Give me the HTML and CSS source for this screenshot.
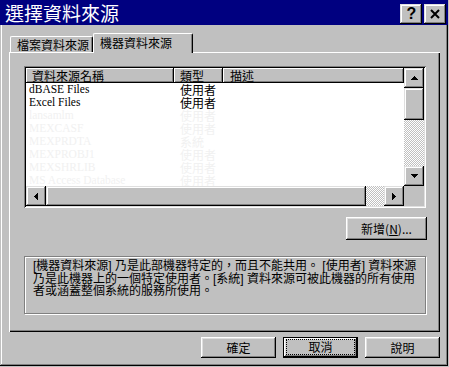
FILE: index.html
```html
<!DOCTYPE html>
<html lang="zh-Hant">
<head>
<meta charset="utf-8">
<title>選擇資料來源</title>
<link rel="stylesheet" href="styles.css">
</head>
<body>
<div class="window">
  <div class="titlebar">
    <span class="title">選擇資料來源</span>
    <div class="caption-btns">
      <div class="cbtn help">?</div>
      <div class="cbtn close">
        <svg width="10" height="10" viewBox="0 0 10 10"><path d="M1 1L9 9M9 1L1 9" stroke="#000" stroke-width="2" fill="none"/></svg>
      </div>
    </div>
  </div>

  <div class="tabs">
    <div class="tab">檔案資料來源</div>
    <div class="tab active">機器資料來源</div>
  </div>

  <div class="panel">
    <div class="listview">
      <div class="lv-content">
        <div class="lv-header">
          <div class="hcell c1">資料來源名稱</div>
          <div class="hcell c2">類型</div>
          <div class="hcell c3">描述</div>
        </div>
        <div class="lv-row"><span class="name">dBASE Files</span><span class="type">使用者</span></div>
        <div class="lv-row"><span class="name">Excel Files</span><span class="type">使用者</span></div>
        <div class="lv-row faded"><span class="name">lansamlm</span><span class="type">使用者</span></div>
        <div class="lv-row faded"><span class="name">MEXCASF</span><span class="type">使用者</span></div>
        <div class="lv-row faded"><span class="name">MEXPRDTA</span><span class="type">系統</span></div>
        <div class="lv-row faded"><span class="name">MEXPROBJ1</span><span class="type">使用者</span></div>
        <div class="lv-row faded"><span class="name">MEXSHRLIB</span><span class="type">使用者</span></div>
        <div class="lv-row faded"><span class="name">MS Access Database</span><span class="type">使用者</span></div>
      </div>
      <div class="vscroll">
        <div class="sbtn"><svg width="7" height="4" viewBox="0 0 7 4"><path d="M3 0h1v1h-1z M2 1h3v1h-3z M1 2h5v1h-5z M0 3h7v1h-7z"/></svg></div>
        <div class="sthumb vthumb"></div>
        <div class="strack"></div>
        <div class="sbtn"><svg width="7" height="4" viewBox="0 0 7 4"><path d="M0 0h7v1h-7z M1 1h5v1h-5z M2 2h3v1h-3z M3 3h1v1h-1z"/></svg></div>
      </div>
      <div class="hscroll">
        <div class="sbtn"><svg width="4" height="7" viewBox="0 0 4 7"><path d="M0 3h1v1h-1z M1 2h1v3h-1z M2 1h1v5h-1z M3 0h1v7h-1z"/></svg></div>
        <div class="sthumb hthumb"></div>
        <div class="strack"></div>
        <div class="sbtn"><svg width="4" height="7" viewBox="0 0 4 7"><path d="M0 0h1v7h-1z M1 1h1v5h-1z M2 2h1v3h-1z M3 3h1v1h-1z"/></svg></div>
      </div>
      <div class="corner"></div>
    </div>

    <div class="add-row">
      <button class="btn add">新增(<u>N</u>)...</button>
    </div>

    <div class="info">[機器資料來源] 乃是此部機器特定的，而且不能共用。 [使用者] 資料來源<br>乃是此機器上的一個特定使用者。[系統] 資料來源可被此機器的所有使用<br>者或涵蓋整個系統的服務所使用。</div>
  </div>

  <div class="buttons">
    <button class="btn">確定</button>
    <button class="btn default"><span class="focus">取消</span></button>
    <button class="btn">說明</button>
  </div>
</div>
</body>
</html>
```

FILE: styles.css
```css
* { box-sizing: border-box; }
html, body { margin: 0; padding: 0; }
body {
  width: 449px;
  height: 367px;
  overflow: hidden;
  background: #c0c0c0;
  font-family: "Liberation Sans", "Noto Sans CJK TC", sans-serif;
  font-size: 12px;
  color: #000;
}

.window {
  width: 448px;
  height: 366px;
  background: #c0c0c0;
  box-shadow: inset -1px -1px #000, inset 1px 1px #c0c0c0,
              inset -2px -2px #808080, inset 2px 2px #fff;
  display: flex;
  flex-direction: column;
}

/* title bar */
.titlebar {
  height: 25px;
  background: #000080;
  display: flex;
  padding: 0 2px 0 5px;
}
.title {
  flex: 1;
  align-self: center;
  color: #fff;
  font-family: "Noto Sans CJK TC", sans-serif;
  font-size: 19px;
  line-height: 19px;
  white-space: nowrap;
}
.caption-btns {
  display: flex;
  gap: 2px;
  padding-top: 4px;
}
.cbtn {
  width: 22px;
  height: 20px;
  background: #c0c0c0;
  box-shadow: inset -1px -1px #000, inset 1px 1px #dfdfdf,
              inset -2px -2px #808080, inset 2px 2px #fff;
  display: flex;
  align-items: center;
  justify-content: center;
}
.help {
  font-family: "Liberation Sans", sans-serif;
  font-weight: bold;
  font-size: 16px;
  line-height: 16px;
  padding-left: 1px;
}

/* tabs */
.tabs {
  display: flex;
  align-items: flex-end;
  height: 20px;
  margin-top: 8px;
  margin-bottom: -1px;
  padding-left: 10px;
  position: relative;
  z-index: 1;
}
.tab {
  height: 16px;
  width: 83px;
  margin-bottom: 1px;
  background: #c0c0c0;
  border-top: 1px solid #fff;
  border-left: 1px solid #fff;
  border-right: 1px solid #000;
  border-radius: 2px 2px 0 0;
  box-shadow: inset -1px 0 #808080;
  display: flex;
  align-items: center;
  padding-left: 6px;
  font-family: "Noto Sans CJK TC", sans-serif;
  white-space: nowrap;
  line-height: 12px;
}
.tab.active {
  height: 20px;
  width: 100px;
  margin-bottom: 0;
  padding-left: 6px;
  padding-bottom: 1px;
}

/* panel */
.panel {
  margin-left: 9px;
  width: 431px;
  height: 280px;
  box-shadow: inset 1px 1px #fff, inset -1px -1px #000,
              inset -2px -2px #808080;
  padding: 14px 14px 0 15px;
}

.listview {
  width: 402px;
  height: 142px;
  padding: 2px;
  background: #fff;
  box-shadow: inset 1px 1px #808080, inset -1px -1px #fff,
              inset 2px 2px #000, inset -2px -2px #dfdfdf;
  display: grid;
  grid-template-columns: 1fr 20px;
  grid-template-rows: 1fr 20px;
}
.lv-content {
  overflow: hidden;
  background: #fff;
}
.lv-header {
  display: flex;
  height: 15px;
}
.hcell {
  height: 15px;
  background: #c0c0c0;
  box-shadow: inset -1px -1px #000, inset 1px 1px #fff, inset -2px -2px #808080;
  padding-left: 6px;
  line-height: 15px;
  font-family: "Noto Sans CJK TC", sans-serif;
  white-space: nowrap;
}
.hcell.c1 { width: 148px; }
.hcell.c2 { width: 49px; }
.hcell.c3 { flex: 1; padding-left: 7px; }

.lv-row {
  display: flex;
  height: 13px;
  line-height: 13px;
  white-space: nowrap;
}
.lv-row .name {
  width: 154px;
  padding-left: 3px;
  font-family: "Liberation Serif", serif;
  font-size: 11.5px;
}
.lv-row .type {
  font-family: "Noto Sans CJK TC", sans-serif;
  font-size: 12px;
}
.lv-row.faded { color: #f1f1f1; }

.vscroll {
  display: flex;
  flex-direction: column;
}
.hscroll {
  display: flex;
}
.sbtn {
  width: 20px;
  height: 20px;
  flex: none;
  background: #c0c0c0;
  box-shadow: inset -1px -1px #000, inset 1px 1px #dfdfdf,
              inset -2px -2px #808080, inset 2px 2px #fff;
  display: flex;
  align-items: center;
  justify-content: center;
}
.sbtn svg { display: block; }
.sthumb {
  flex: none;
  background: #c0c0c0;
  box-shadow: inset -1px -1px #000, inset 1px 1px #dfdfdf,
              inset -2px -2px #808080, inset 2px 2px #fff;
}
.vthumb { height: 32px; width: 20px; }
.hthumb { width: 320px; height: 20px; }
.strack {
  flex: 1;
  background: repeating-conic-gradient(#c0c0c0 0 25%, #fff 0 50%) 0 0 / 2px 2px;
}
.corner { background: #c0c0c0; }

/* buttons */
.btn {
  font: inherit;
  font-family: "Noto Sans CJK TC", sans-serif;
  font-size: 12px;
  color: #000;
  background: #c0c0c0;
  border: none;
  margin: 0;
  padding: 0;
  box-shadow: inset -1px -1px #000, inset 1px 1px #fff,
              inset -2px -2px #808080, inset 2px 2px #dfdfdf;
  display: flex;
  align-items: center;
  justify-content: center;
  line-height: 12px;
  white-space: nowrap;
}

.add-row {
  display: flex;
  justify-content: flex-end;
  margin-top: 9px;
  width: 403px;
}
.btn.add { width: 81px; height: 23px; }
.btn.add u { text-decoration: underline; }

.info {
  margin-top: 16px;
  width: 402px;
  height: 58px;
  border: 1px solid #808080;
  box-shadow: inset 1px 1px #fff, 1px 1px #fff;
  padding: 3px 0 0 8px;
  line-height: 12.5px;
  white-space: nowrap;
}

.buttons {
  display: flex;
  justify-content: flex-end;
  gap: 7px;
  margin-top: 5px;
  padding-right: 8px;
}
.buttons .btn { width: 75px; height: 21px; }
.btn.default {
  border: 1px solid #000;
  align-items: stretch;
}
.focus {
  flex: 1;
  margin: 1px 2px 2px 2px;
  border: 1px dotted #000;
  display: flex;
  align-items: center;
  justify-content: center;
}
```
